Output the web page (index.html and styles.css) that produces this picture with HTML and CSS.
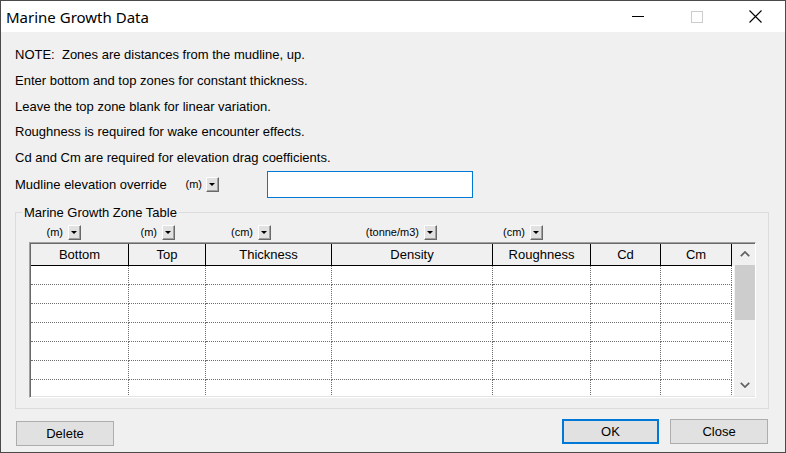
FILE: index.html
```html
<!DOCTYPE html>
<html>
<head>
<meta charset="utf-8">
<link rel="stylesheet" href="styles.css">
</head>
<body>
<div class="window">
  <div class="titlebar">
    <span class="title">Marine Growth Data</span>
    <span class="ctrl"><svg width="12" height="1" viewBox="0 0 12 1"><rect width="12" height="1" fill="#000"/></svg></span>
    <span class="ctrl"><svg width="12" height="12" viewBox="0 0 12 12"><rect x="0.5" y="0.5" width="11" height="11" fill="none" stroke="#cccccc"/></svg></span>
    <span class="ctrl"><svg width="13" height="13" viewBox="0 0 13 13"><path d="M0.5 0.5L12.5 12.5M12.5 0.5L0.5 12.5" stroke="#000" stroke-width="1.1" fill="none"/></svg></span>
  </div>
  <div class="content">
    <p class="note">NOTE:&nbsp; Zones are distances from the mudline, up.</p>
    <p class="note">Enter bottom and top zones for constant thickness.</p>
    <p class="note">Leave the top zone blank for linear variation.</p>
    <p class="note">Roughness is required for wake encounter effects.</p>
    <p class="note">Cd and Cm are required for elevation drag coefficients.</p>
    <div class="mudline">
      <span class="mud-label">Mudline elevation override</span>
      <span class="unitbox"><span class="unit">(m)</span><span class="dd"></span></span>
      <input class="mud-input" type="text">
    </div>
    <fieldset class="group">
      <legend class="legend">Marine Growth Zone Table</legend>
      <div class="units">
        <div class="ucell w1"><span class="unit">(m)</span><span class="dd"></span></div>
        <div class="ucell w2"><span class="unit">(m)</span><span class="dd"></span></div>
        <div class="ucell w3"><span class="unit">(cm)</span><span class="dd"></span></div>
        <div class="ucell w4"><span class="unit">(tonne/m3)</span><span class="dd"></span></div>
        <div class="ucell w5"><span class="unit">(cm)</span><span class="dd"></span></div>
      </div>
      <div class="grid">
        <div class="table">
          <div class="row thead">
            <div class="th">Bottom</div><div class="th">Top</div><div class="th">Thickness</div><div class="th">Density</div><div class="th">Roughness</div><div class="th">Cd</div><div class="th">Cm</div><div class="fill"></div>
          </div>
          <div class="row tr"><div class="td"></div><div class="td"></div><div class="td"></div><div class="td"></div><div class="td"></div><div class="td"></div><div class="td"></div><div class="fill"></div></div>
          <div class="row tr"><div class="td"></div><div class="td"></div><div class="td"></div><div class="td"></div><div class="td"></div><div class="td"></div><div class="td"></div><div class="fill"></div></div>
          <div class="row tr"><div class="td"></div><div class="td"></div><div class="td"></div><div class="td"></div><div class="td"></div><div class="td"></div><div class="td"></div><div class="fill"></div></div>
          <div class="row tr"><div class="td"></div><div class="td"></div><div class="td"></div><div class="td"></div><div class="td"></div><div class="td"></div><div class="td"></div><div class="fill"></div></div>
          <div class="row tr"><div class="td"></div><div class="td"></div><div class="td"></div><div class="td"></div><div class="td"></div><div class="td"></div><div class="td"></div><div class="fill"></div></div>
          <div class="row tr"><div class="td"></div><div class="td"></div><div class="td"></div><div class="td"></div><div class="td"></div><div class="td"></div><div class="td"></div><div class="fill"></div></div>
          <div class="row tr"><div class="td"></div><div class="td"></div><div class="td"></div><div class="td"></div><div class="td"></div><div class="td"></div><div class="td"></div><div class="fill"></div></div>
        </div>
        <div class="vscroll">
          <div class="sb-btn"><svg width="10" height="6" viewBox="0 0 10 6"><polyline points="0.8,5.2 5,1 9.2,5.2" fill="none" stroke="#606060" stroke-width="1.7"/></svg></div>
          <div class="sb-thumb"></div>
          <div class="sb-space"></div>
          <div class="sb-btn"><svg width="10" height="6" viewBox="0 0 10 6"><polyline points="0.8,0.8 5,5 9.2,0.8" fill="none" stroke="#606060" stroke-width="1.7"/></svg></div>
        </div>
      </div>
    </fieldset>
    <div class="buttons">
      <button class="btn delete" type="button">Delete</button>
      <button class="btn ok" type="button">OK</button>
      <button class="btn close" type="button">Close</button>
    </div>
  </div>
</div>
</body>
</html>
```
FILE: styles.css
```css
html, body {
  margin: 0;
  padding: 0;
  background: #f0f0f0;
}

.window {
  width: 786px;
  height: 453px;
  box-sizing: border-box;
  border: 1px solid #4a4a4a;
  background: #f0f0f0;
  display: flex;
  flex-direction: column;
  font-family: "Liberation Sans", Arial, sans-serif;
  font-size: 13px;
  color: #000;
  overflow: hidden;
}

.titlebar {
  height: 31px;
  flex: none;
  background: #fff;
  display: flex;
  align-items: center;
}

.title {
  flex: 1;
  padding-left: 5px;
  font-family: "Noto Sans", sans-serif;
  font-size: 15px;
  white-space: nowrap;
}

.ctrl {
  width: 59px;
  height: 31px;
  display: flex;
  align-items: center;
  justify-content: center;
}

.content {
  flex: 1;
  padding: 10px 16px 0 14px;
}

.note {
  margin: 0;
  line-height: 25.8px;
  white-space: nowrap;
}

.mudline {
  display: flex;
  align-items: center;
  height: 27px;
}

.mud-label {
  width: 160px;
  white-space: nowrap;
}

.unitbox {
  width: 44px;
  display: flex;
  justify-content: flex-end;
  align-items: center;
  gap: 4px;
}

.unit {
  font-size: 11px;
  line-height: 15px;
  white-space: nowrap;
}

.dd {
  width: 13px;
  height: 15px;
  box-sizing: border-box;
  border: 1px solid;
  border-color: #fff #696969 #696969 #fff;
  box-shadow: inset -1px -1px #a0a0a0;
  background: #e1e1e1;
  display: flex;
  align-items: center;
  justify-content: center;
  flex: none;
}

.dd::after {
  content: "";
  width: 0;
  height: 0;
  border-left: 3px solid transparent;
  border-right: 3px solid transparent;
  border-top: 3px solid #000;
  margin-top: 1px;
  margin-right: 1px;
}

.mud-input {
  margin: 0 0 0 48px;
  width: 206px;
  height: 27px;
  box-sizing: border-box;
  border: 1px solid #0078d7;
  background: #fff;
  padding: 0;
  outline: none;
}

.group {
  margin: 7px 0 0;
  padding: 5px 12px 10px 13px;
  border: 1px solid #dcdcdc;
  min-width: 0;
}

.legend {
  padding: 0 2px;
  margin-left: -7px;
  line-height: 15px;
  font-size: 13px;
}

.units {
  display: flex;
  height: 15px;
}

.ucell {
  display: flex;
  justify-content: flex-end;
  align-items: center;
  gap: 5px;
  flex: none;
}

.w1 { width: 52px; }
.w2 { width: 94px; }
.w3 { width: 96px; }
.w4 { width: 166px; }
.w5 { width: 106px; }

.grid {
  margin-top: 2px;
  height: 156px;
  box-sizing: border-box;
  border: 1px solid;
  border-color: #a0a0a0 #fff #fff #a0a0a0;
  box-shadow: inset 1px 1px #696969, inset -1px -1px #e3e3e3;
  padding: 1px 0 1px 1px;
  display: flex;
  background: #fff;
}

.table {
  flex: 1;
  overflow: hidden;
  display: flex;
  flex-direction: column;
  background: #fff;
}

.row {
  display: grid;
  grid-template-columns: 98px 77px 126px 161px 98px 70px 71px 1fr;
  flex: none;
}

.thead {
  height: 22px;
  background: #f0f0f0;
}

.th {
  border-right: 1px solid #000;
  border-bottom: 1px solid #000;
  box-sizing: border-box;
  display: flex;
  align-items: center;
  justify-content: center;
  white-space: nowrap;
}

.tr {
  height: 19px;
}

.td {
  border-right: 1px dotted #6e6e6e;
  border-bottom: 1px dotted #6e6e6e;
  box-sizing: border-box;
}

.vscroll {
  width: 21px;
  flex: none;
  background: #f0f0f0;
  display: flex;
  flex-direction: column;
}

.sb-btn {
  height: 21px;
  flex: none;
  display: flex;
  align-items: center;
  justify-content: center;
}

.sb-thumb {
  height: 55px;
  flex: none;
  margin-left: 1px;
  background: #cdcdcd;
}

.sb-space {
  flex: 1;
}

.buttons {
  display: flex;
  align-items: flex-start;
  margin-top: 10px;
}

.btn {
  height: 25px;
  box-sizing: border-box;
  background: #e1e1e1;
  border: 1px solid #adadad;
  font-family: "Liberation Sans", Arial, sans-serif;
  font-size: 13px;
  color: #000;
  padding: 0;
  margin: 0;
}

.delete {
  width: 98px;
  margin-top: 2px;
  margin-left: 1px;
}

.ok {
  width: 97px;
  margin-left: auto;
  border: 2px solid #0078d7;
}

.close {
  width: 98px;
  margin-left: 11px;
  margin-right: 1px;
}
```
